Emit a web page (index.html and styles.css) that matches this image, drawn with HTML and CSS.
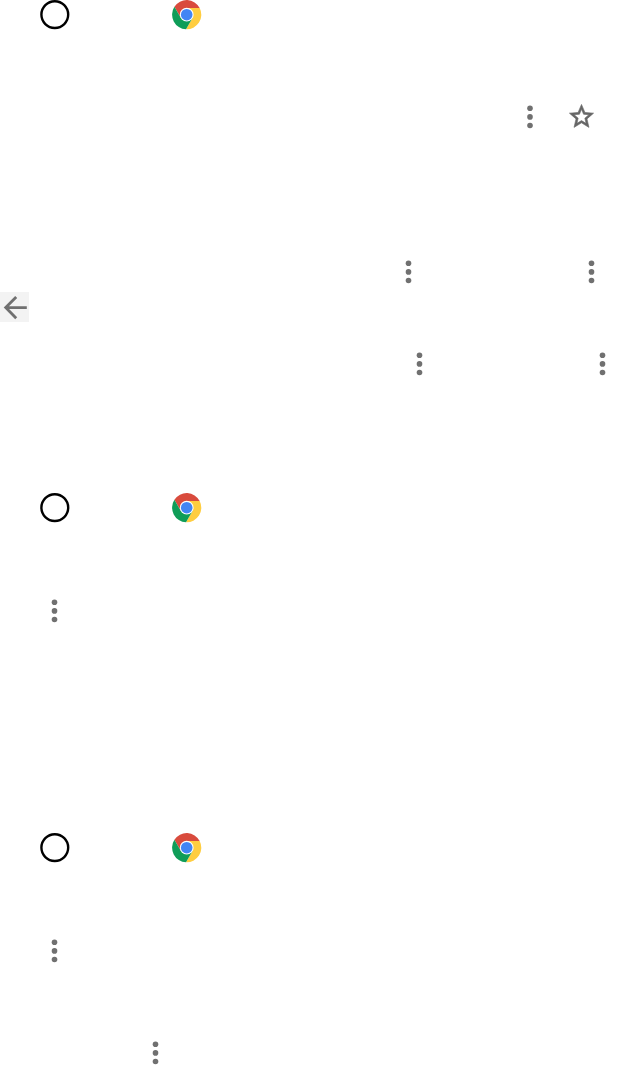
FILE: index.html
```html
<!DOCTYPE html>
<html lang="en">

<head>
    <meta charset="UTF-8">
    <meta name="viewport" content="width=device-width, initial-scale=1.0">
    <title>Icons</title>
    <link rel="stylesheet" href="styles.css">
</head>

<body>
    <svg class="symbols" width="0" height="0">
        <symbol id="home" viewBox="0 0 30 30">
            <circle cx="14.8" cy="14.6" r="13.4" fill="none" stroke="#000" stroke-width="2.4" />
        </symbol>
        <symbol id="chrome" viewBox="-14.7 -14.7 30 30">
            <path fill="#d94b3d" d="M-12.29-7.88A14.6 14.6 0 0 1 12.97-6.7H0L-5.8 3.35z" />
            <path fill="#ffcd40" d="M12.97-6.7A14.6 14.6 0 0 1-.68 14.58L5.8 3.35 0-6.7z" />
            <path fill="#0f9d58" d="M-.68 14.58A14.6 14.6 0 0 1-12.29-7.88L-5.8 3.35H5.8z" />
            <circle r="6.9" fill="#fff" />
            <circle r="5.8" fill="#4285f4" />
        </symbol>
        <symbol id="more" viewBox="0 0 9 29">
            <g fill="#707070">
                <circle cx="4.5" cy="6.3" r="2.8" />
                <circle cx="4.5" cy="14.9" r="2.8" />
                <circle cx="4.5" cy="23.5" r="2.8" />
            </g>
        </symbol>
        <symbol id="star" viewBox="0 0 24 24">
            <path fill="#666" stroke="#666" stroke-width=".5" d="M22 9.24l-7.19-.62L12 2 9.19 8.63 2 9.24l5.46 4.73L5.82 21 12 17.27 18.18 21l-1.63-7.03L22 9.24zM12 15.4l-3.76 2.27 1-4.28-3.32-2.88 4.38-.38L12 6.1l1.71 4.04 4.38.38-3.32 2.88 1 4.28L12 15.4z" />
        </symbol>
        <symbol id="back" viewBox="0 0 29 30">
            <path fill="none" stroke="#707070" stroke-width="2.8" d="M26.8 15.6H6M16.2 4.9L5.7 15.6 16.2 26.3" />
        </symbol>
    </svg>

    <div class="row">
        <svg class="icon home"><use href="#home" /></svg>
        <svg class="icon chrome"><use href="#chrome" /></svg>
    </div>
    <div class="row row-star">
        <svg class="more"><use href="#more" /></svg>
        <svg class="star"><use href="#star" /></svg>
    </div>
    <div class="row row-pair">
        <svg class="more"><use href="#more" /></svg>
        <svg class="more"><use href="#more" /></svg>
    </div>
    <div class="row row-back">
        <svg class="back"><use href="#back" /></svg>
    </div>
    <div class="row row-pair-right">
        <svg class="more"><use href="#more" /></svg>
        <svg class="more"><use href="#more" /></svg>
    </div>

    <div class="row row-second">
        <svg class="icon home"><use href="#home" /></svg>
        <svg class="icon chrome"><use href="#chrome" /></svg>
    </div>
    <div class="row row-menu">
        <svg class="more"><use href="#more" /></svg>
    </div>

    <div class="row row-third">
        <svg class="icon home"><use href="#home" /></svg>
        <svg class="icon chrome"><use href="#chrome" /></svg>
    </div>
    <div class="row row-menu">
        <svg class="more"><use href="#more" /></svg>
    </div>
    <div class="row row-last">
        <svg class="more"><use href="#more" /></svg>
    </div>
</body>

</html>
```
FILE: styles.css
```css
body {
    margin: 0;
    background: white;
    font-family: Arial, "Liberation Sans", sans-serif;
}

.symbols {
    display: none;
}

.row {
    display: flex;
    height: 29px;
    align-items: flex-start;
}

.row svg {
    display: block;
    flex: none;
}

.icon {
    width: 30px;
    height: 30px;
}

.home {
    margin-left: 40px;
}

.chrome {
    margin-left: 102px;
}

.more {
    width: 9px;
    height: 29px;
}

.star {
    width: 29px;
    height: 29px;
}

.back {
    width: 29px;
    height: 30px;
    background: #f3f3f3;
}

.row-star {
    margin-top: 73px;
    padding-left: 525px;
    gap: 32px;
}

.row-star .more {
    width: 10px;
}

.row-pair {
    margin-top: 126px;
    padding-left: 404px;
    gap: 174px;
}

.row-back {
    margin-top: 6px;
    height: 30px;
}

.row-pair-right {
    margin-top: 27px;
    padding-left: 415px;
    gap: 174px;
}

.row-second {
    margin-top: 115px;
}

.row-menu {
    margin-top: 74px;
    padding-left: 50px;
}

.row-third {
    margin-top: 208px;
}

.row-last {
    margin-top: 73px;
    padding-left: 151px;
}
```
